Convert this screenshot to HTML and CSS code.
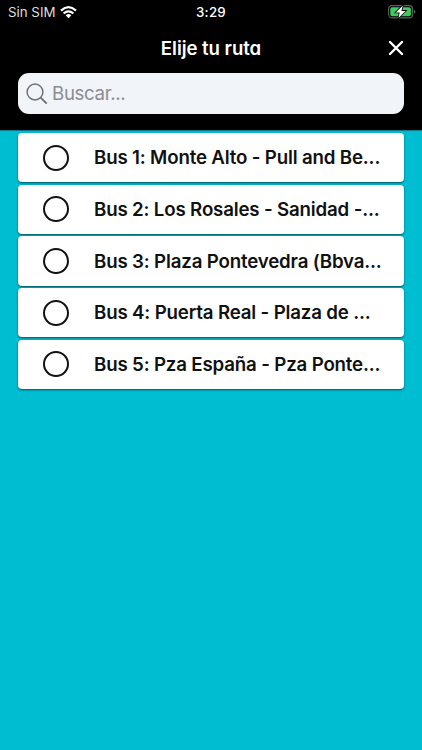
FILE: index.html
```html
<!DOCTYPE html>
<html lang="es">
<head>
<meta charset="utf-8">
<title>Elije tu ruta</title>
<link rel="stylesheet" href="styles.css">
</head>
<body>
<header class="header">
  <div class="status">
    <div class="carrier"><span>Sin SIM</span>
      <svg class="wifi" width="17" height="13" viewBox="0 0 17 13" fill="none" stroke="#fff" stroke-width="2.2"><path d="M1 4.6Q8.500-2.200 16 4.600"/><path d="M3.600 7.500Q8.500 3.300 13.400 7.500"/><path d="M5.700 9.200Q8.500 7 11.300 9.200L8.500 12.300z" fill="#fff" stroke="none"/></svg>
    </div>
    <time class="clock">3:29</time>
    <svg class="battery" width="28" height="14" viewBox="0 0 28 14"><rect x=".6" y=".6" width="24" height="12.300" rx="3.500" fill="none" stroke="#5d625e" stroke-width="1.100"/><rect x="2.300" y="2.300" width="20.600" height="8.900" rx="2" fill="#3dcb5c"/><path d="M25.900 4.700q1.500.5 1.500 2t-1.500 2z" fill="#5d625e"/><path d="M14.800.4 7.800 7.500h3.900l-1.200 5.400 7-7h-4z" fill="#fff" stroke="#000" stroke-width="1.600" paint-order="stroke"/></svg>
  </div>
  <div class="titlebar">
    <h1 class="title">Elije tu ruta</h1>
    <svg class="close" width="16" height="16" viewBox="0 0 16 16" stroke="#fff" stroke-width="2.400" stroke-linecap="round"><path d="M2 2l12 12M14 2L2 14"/></svg>
  </div>
  <div class="search">
    <svg width="22" height="22" viewBox="0 0 22 22" fill="none" stroke="#6f7276" stroke-width="1.500"><circle cx="9" cy="9" r="7.900"/><path d="M14.700 14.700l6 6" stroke-width="1.900"/></svg>
    <span>Buscar...</span>
  </div>
</header>
<main class="routes">
  <div class="route"><i class="radio"></i><span class="name">Bus 1: Monte Alto - Pull and Be...</span></div>
  <div class="route"><i class="radio"></i><span class="name">Bus 2: Los Rosales - Sanidad -...</span></div>
  <div class="route"><i class="radio"></i><span class="name">Bus 3: Plaza Pontevedra (Bbva...</span></div>
  <div class="route"><i class="radio"></i><span class="name">Bus 4: Puerta Real - Plaza de ...</span></div>
  <div class="route"><i class="radio"></i><span class="name">Bus 5: Pza España - Pza Ponte...</span></div>
</main>
</body>
</html>
```
FILE: styles.css
```css
* { box-sizing: border-box; }
body { margin: 0; min-height: 750px; background: #00bdd1; font-family: Inter, sans-serif; color: #111; }
.header { height: 130px; background: #000; padding: 0 18px; color: #fff; box-shadow: 0 1px 0 #087985; }
.status { display: grid; grid-template-columns: 1fr auto 1fr; height: 24px; align-items: center; margin: 0 -10px; font-size: 13.3px; }
.carrier { display: flex; align-items: center; gap: 5px; color: #ddd; }
.clock { font-weight: 500; letter-spacing: .25px; }
.battery { justify-self: end; margin-right: -2px; margin-top: -1px; }
.titlebar { display: grid; grid-template-columns: 16px 1fr 16px; height: 48px; align-items: center; }
.title { grid-column: 2; margin: 0; text-align: center; font-size: 18.6px; line-height: 28px; font-weight: 600; font-feature-settings: "cv11"; letter-spacing: -.05px; }
.search { display: flex; align-items: center; gap: 4px; height: 41px; margin-top: 1px; padding-left: 8px; border-radius: 11px; background: #f1f4f9; color: #8b8d91; font-size: 18.7px; letter-spacing: -.35px; line-height: 26px; }
.routes { display: flex; flex-direction: column; gap: 2.4px; padding: 3px 18px; }
.route { display: flex; align-items: center; height: 49.3px; padding-left: 25px; background: #fff; border-radius: 4px; box-shadow: 0 1px 2px rgba(0, 40, 45, .7); }
.radio { width: 26px; height: 26px; border: 2px solid #111; border-radius: 50%; margin-right: 25px; }
.name { font-size: 18.7px; font-weight: 600; letter-spacing: -.17px; white-space: pre; }
```
